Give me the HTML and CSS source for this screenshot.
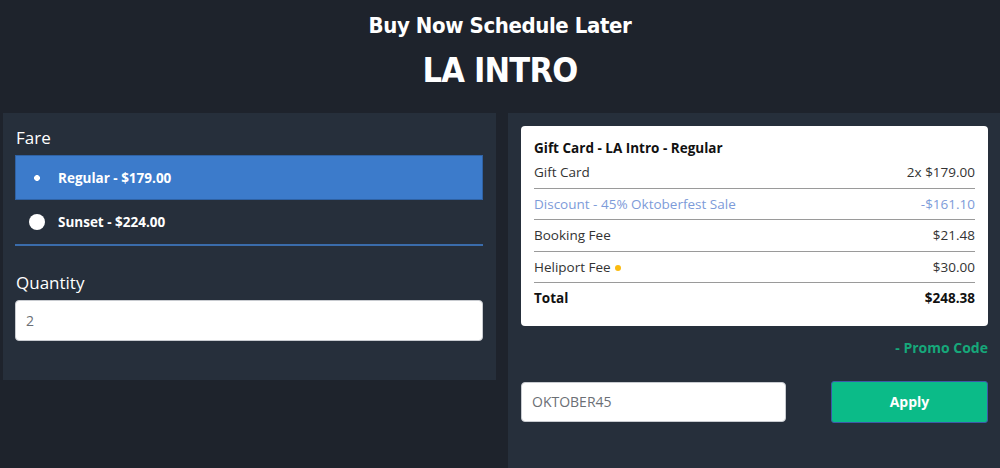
FILE: index.html
```html
<!DOCTYPE html>
<html lang="en">
<head>
<meta charset="utf-8">
<title>Buy Now Schedule Later</title>
<link rel="stylesheet" href="styles.css">
</head>
<body>
<header class="hero">
  <h2 class="subtitle">Buy Now Schedule Later</h2>
  <h1 class="title">LA INTRO</h1>
</header>
<main class="columns">
  <section class="panel panel-left">
    <div class="label">Fare</div>
    <div class="fares">
      <label class="fare fare-selected"><span class="radio radio-on"></span><span class="fare-name">Regular - $179.00</span></label>
      <label class="fare"><span class="radio"></span><span class="fare-name">Sunset - $224.00</span></label>
    </div>
    <div class="label label-qty">Quantity</div>
    <div class="input">2</div>
  </section>
  <section class="panel panel-right">
    <div class="card">
      <div class="card-title">Gift Card - LA Intro - Regular</div>
      <div class="row"><span>Gift Card</span><span>2x $179.00</span></div>
      <div class="row row-discount"><span>Discount - 45% Oktoberfest Sale</span><span>-$161.10</span></div>
      <div class="row"><span>Booking Fee</span><span>$21.48</span></div>
      <div class="row"><span>Heliport Fee <i class="dot"></i></span><span>$30.00</span></div>
      <div class="row row-total"><span>Total</span><span>$248.38</span></div>
    </div>
    <div class="promo-link">- Promo Code</div>
    <div class="promo">
      <div class="input promo-input">OKTOBER45</div>
      <button class="apply">Apply</button>
    </div>
  </section>
</main>
</body>
</html>
```
FILE: styles.css
```css
html, body {
  margin: 0;
  padding: 0;
  background: #1e232c;
  font-family: "Open Sans", "Liberation Sans", sans-serif;
  color: #fff;
  height: 468px;
  overflow: hidden;
}
.hero {
  text-align: center;
  height: 113px;
  box-sizing: border-box;
  padding-top: 11px;
}
.subtitle {
  margin: 0;
  font-family: "DejaVu Sans", sans-serif;
  font-stretch: condensed;
  font-size: 22px;
  line-height: 30px;
  font-weight: bold;
  letter-spacing: -0.4px;
}
.title {
  margin: 9px 0 0;
  font-family: "DejaVu Sans", sans-serif;
  font-stretch: condensed;
  font-size: 34px;
  line-height: 40px;
  font-weight: bold;
  letter-spacing: -0.8px;
}
.columns {
  display: flex;
  gap: 12px;
  padding-left: 3px;
  align-items: flex-start;
}
.panel {
  background: #262f3b;
  box-sizing: border-box;
}
.panel-left {
  width: 493px;
  padding: 13px 13px 39px 12px;
}
.panel-right {
  width: 492px;
  height: 355px;
  padding: 13px 12px 0 13px;
}
.label {
  font-size: 17px;
  line-height: 24px;
  padding-left: 1px;
  margin-bottom: 5px;
}
.label-qty {
  margin-top: 25px;
  margin-bottom: 5px;
}
.fares {
  border-bottom: 2px solid #3a6cab;
}
.fare {
  display: flex;
  align-items: center;
  height: 44px;
  box-sizing: border-box;
  font-size: 13.5px;
  font-weight: bold;
}
.fare-selected {
  background: #3c7bcb;
  border: 1px solid #2f62a4;
  height: 45px;
}
.radio {
  width: 16px;
  height: 16px;
  border-radius: 50%;
  background: #fff;
  margin: 0 13px 0 14px;
  flex: none;
}
.fare-selected .radio {
  margin-left: 13px;
}
.radio-on {
  background: radial-gradient(circle, #fff 0 2.6px, transparent 3.2px);
}
.input {
  background: #fff;
  border: 1px solid #c8cbd0;
  border-radius: 4px;
  height: 41px;
  box-sizing: border-box;
  display: flex;
  align-items: center;
  padding-left: 10px;
  color: #6b6f75;
  font-size: 14px;
}
.card {
  background: #fff;
  border-radius: 4px;
  padding: 12px 13px 12px 13px;
  color: #222;
  font-size: 13.5px;
}
.card-title {
  font-weight: bold;
  line-height: 20px;
  margin-bottom: -1px;
  color: #111;
}
.row {
  display: flex;
  justify-content: space-between;
  align-items: center;
  line-height: 20.5px;
  padding: 5px 0;
  border-bottom: 1px solid #9a9a9a;
  color: #333;
}
.row-discount {
  color: #7d9bd9;
}
.row-total {
  border-bottom: none;
  font-weight: bold;
  color: #111;
}
.dot {
  display: inline-block;
  width: 6px;
  height: 6px;
  border-radius: 50%;
  background: #fbbb10;
  vertical-align: middle;
  margin-left: 1px;
}
.promo-link {
  text-align: right;
  color: #16a87a;
  font-weight: bold;
  font-size: 14px;
  line-height: 20px;
  margin-top: 12px;
}
.promo {
  display: flex;
  justify-content: space-between;
  align-items: center;
  margin-top: 23px;
}
.promo-input {
  width: 265px;
  height: 40px;
}
.apply {
  width: 157px;
  height: 42px;
  background: #0bbb88;
  border: 1px solid #3d59a8;
  border-radius: 3px;
  color: #fff;
  font-family: "Open Sans", "Liberation Sans", sans-serif;
  font-weight: bold;
  font-size: 14px;
}
```
